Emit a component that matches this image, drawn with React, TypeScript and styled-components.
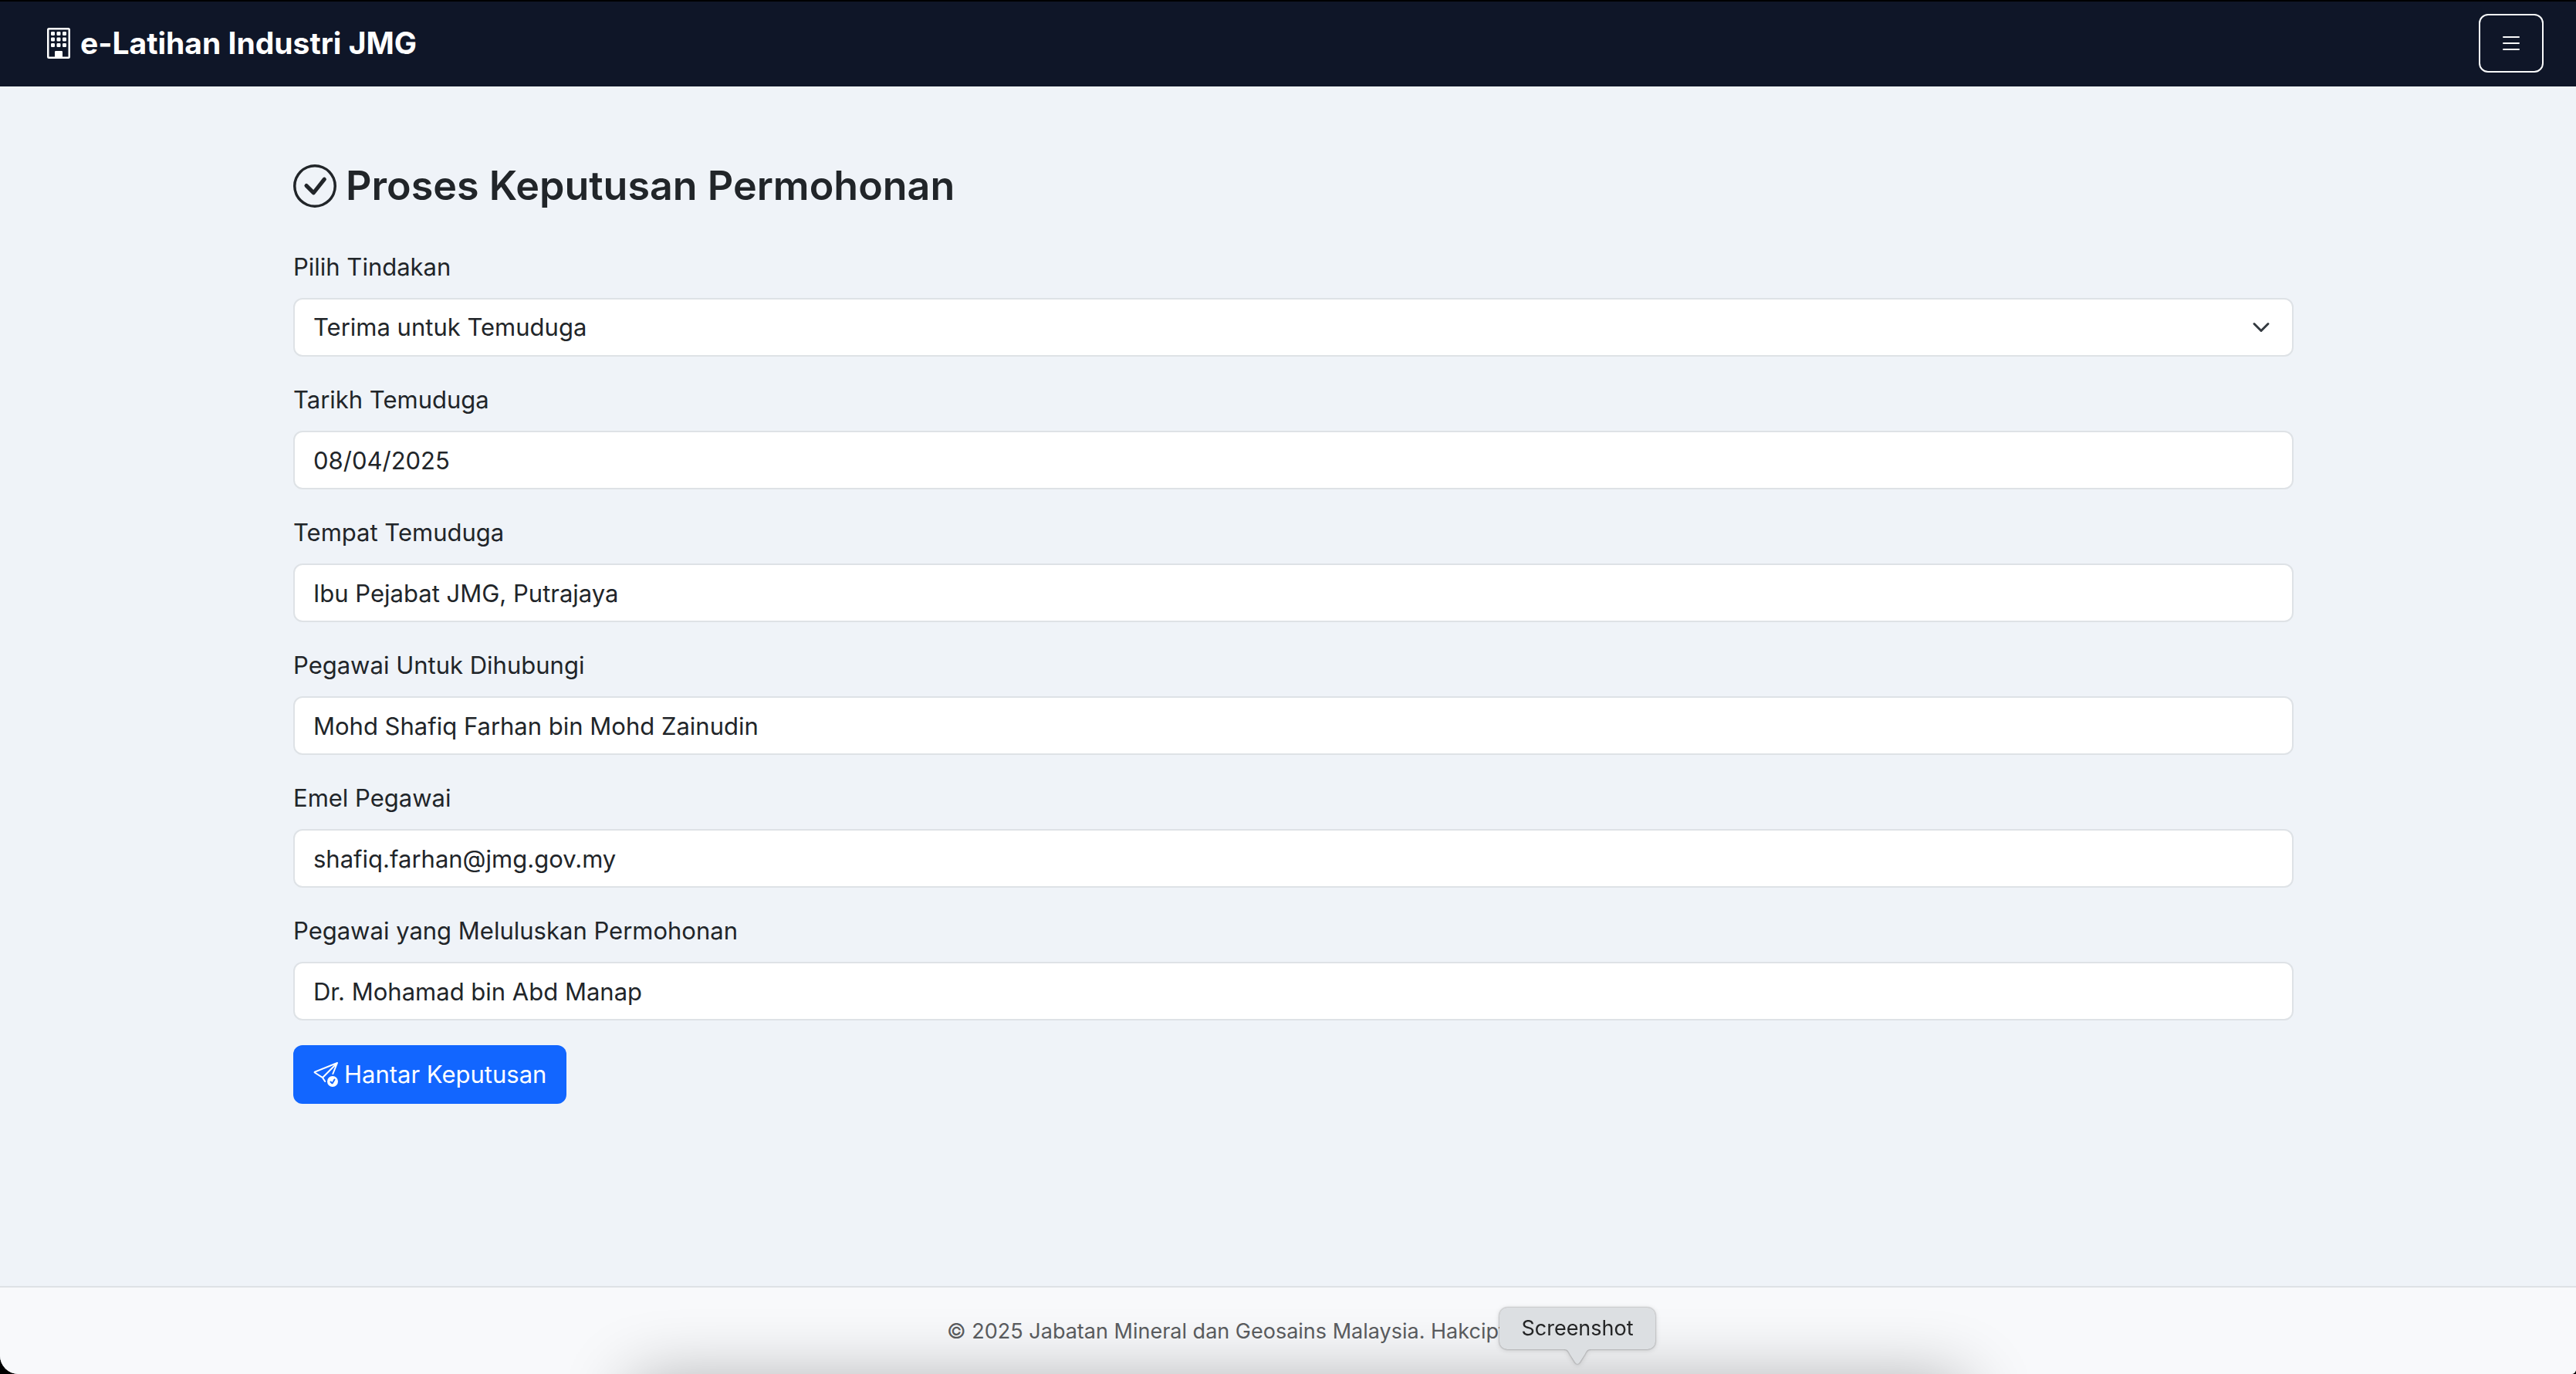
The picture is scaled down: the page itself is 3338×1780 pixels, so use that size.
import React from "react";
import styled, { createGlobalStyle } from "styled-components";
import { BsBuilding, BsCheckCircle, BsList, BsSendCheck } from "react-icons/bs";

const GlobalStyle = createGlobalStyle`
  *, *::before, *::after { box-sizing: border-box; }
  html { background: #000; }
  body {
    margin: 0;
    overflow-x: hidden;
    color: #212529;
    font-family: Inter, "Liberation Sans", sans-serif;
    font-size: 31px;
    line-height: 48px;
  }
  svg { display: block; flex: none; }
`;

const Page = styled.div`
  display: flex;
  flex-direction: column;
  min-height: 100vh;
  overflow: hidden;
  background: #eff3f8;
  border-radius: 0 0 6px 24px;
`;

const Navbar = styled.header`
  display: flex;
  align-items: center;
  justify-content: space-between;
  padding: 18px 42px 18px 56px;
  color: #fff;
  background: #0f1628;
  box-shadow: inset 0 2px 0 #000;
`;

const Brand = styled.a`
  display: flex;
  align-items: center;
  gap: 8px;
  color: inherit;
  font-size: 39px;
  font-weight: 700;
  line-height: 60px;
  text-decoration: none;
`;

const MenuButton = styled.button`
  display: flex;
  align-items: center;
  justify-content: center;
  width: 84px;
  height: 76px;
  padding: 0;
  color: #f8f9fa;
  background: transparent;
  border: 2px solid #f8f9fa;
  border-radius: 12px;
`;

const Main = styled.main`
  flex: 1;
  padding: 96px 0 96px 14px;
`;

const Container = styled.div`
  max-width: 2640px;
  margin: 0 auto;
  padding: 0 24px;
`;

const Title = styled.h1`
  display: flex;
  align-items: center;
  gap: 12px;
  margin: 0 0 48px;
  font-size: 52px;
  font-weight: 600;
  line-height: 66px;
`;

const Field = styled.div`
  display: flex;
  flex-direction: column;
  gap: 16px;
  margin-bottom: 32px;
`;

const Label = styled.label`
  align-self: flex-start;
`;

const Control = styled.input`
  display: block;
  width: 100%;
  height: 76px;
  padding: 12px 24px;
  color: #212529;
  font: inherit;
  background: #fff;
  border: 2px solid #dee2e6;
  border-radius: 12px;
  appearance: none;
`;

const SelectWrap = styled.div`
  position: relative;
`;

const Chevron = styled.svg`
  position: absolute;
  top: 26px;
  right: 30px;
  width: 24px;
  height: 24px;
  pointer-events: none;
`;

const SubmitButton = styled.button`
  display: inline-flex;
  align-items: center;
  gap: 8px;
  height: 76px;
  padding: 0 26px;
  color: #fff;
  font: inherit;
  background: #1266ff;
  border: 0;
  border-radius: 12px;
`;

const Footer = styled.footer`
  padding: 36px 0 34px 14px;
  color: #5b5d60;
  font-size: 27px;
  line-height: 42px;
  text-align: center;
  background: #f8f9fb;
  border-top: 2px solid #dee2e6;
`;

const DockShadow = styled.div`
  position: fixed;
  top: calc(100% + 10px);
  left: 820px;
  right: 793px;
  height: 200px;
  box-shadow: 0 0 90px rgba(0, 0, 0, 0.32);
  pointer-events: none;
`;

const DockTooltip = styled.div`
  position: fixed;
  bottom: 32px;
  left: 1943px;
  width: 202px;
  height: 54px;
  color: #242526;
  font-size: 27px;
  line-height: 54px;
  text-align: center;
  background: #dcdfe2;
  border-radius: 10px;
  filter: drop-shadow(0 0 1px rgba(0, 0, 0, 0.4)) drop-shadow(0 1px 3px rgba(0, 0, 0, 0.15));
`;

const TooltipArrow = styled.svg`
  position: absolute;
  top: 100%;
  left: 50%;
  width: 36px;
  height: 20px;
  margin-left: -18px;
`;

const textFields = [
  { id: "tarikh", label: "Tarikh Temuduga", value: "08/04/2025", type: "text" },
  { id: "tempat", label: "Tempat Temuduga", value: "Ibu Pejabat JMG, Putrajaya", type: "text" },
  { id: "pegawai", label: "Pegawai Untuk Dihubungi", value: "Mohd Shafiq Farhan bin Mohd Zainudin", type: "text" },
  { id: "emel", label: "Emel Pegawai", value: "shafiq.farhan@jmg.gov.my", type: "email" },
  { id: "pelulus", label: "Pegawai yang Meluluskan Permohonan", value: "Dr. Mohamad bin Abd Manap", type: "text" },
];

export default function App() {
  return (
    <>
      <GlobalStyle />
      <Page>
        <Navbar>
          <Brand href="#">
            <BsBuilding size={40} aria-hidden />
            <span>e-Latihan Industri JMG</span>
          </Brand>
          <MenuButton type="button" aria-label="Menu">
            <BsList size={32} aria-hidden />
          </MenuButton>
        </Navbar>
        <Main>
          <Container>
            <Title>
              <BsCheckCircle size={56} aria-hidden />
              <span>Proses Keputusan Permohonan</span>
            </Title>
            <form onSubmit={(event) => event.preventDefault()}>
              <Field>
                <Label htmlFor="tindakan">Pilih Tindakan</Label>
                <SelectWrap>
                  <Control as="select" id="tindakan" defaultValue="terima">
                    <option value="terima">Terima untuk Temuduga</option>
                  </Control>
                  <Chevron viewBox="0 0 16 16" fill="none" aria-hidden>
                    <path d="m2 5 6 6 6-6" stroke="#343a40" strokeWidth="2" strokeLinecap="round" strokeLinejoin="round" />
                  </Chevron>
                </SelectWrap>
              </Field>
              {textFields.map((field) => (
                <Field key={field.id}>
                  <Label htmlFor={field.id}>{field.label}</Label>
                  <Control id={field.id} type={field.type} defaultValue={field.value} />
                </Field>
              ))}
              <SubmitButton type="submit">
                <BsSendCheck size={32} aria-hidden />
                <span>Hantar Keputusan</span>
              </SubmitButton>
            </form>
          </Container>
        </Main>
        <Footer>© 2025 Jabatan Mineral dan Geosains Malaysia. Hakcipta Terpelihara.</Footer>
      </Page>
      <DockShadow />
      <DockTooltip role="tooltip">
        Screenshot
        <TooltipArrow viewBox="0 0 36 20" aria-hidden>
          <path d="M0 0C5 0 6 2 8 6L15 17Q18 21 21 17L28 6C30 2 31 0 36 0Z" fill="#dcdfe2" />
        </TooltipArrow>
      </DockTooltip>
    </>
  );
}
